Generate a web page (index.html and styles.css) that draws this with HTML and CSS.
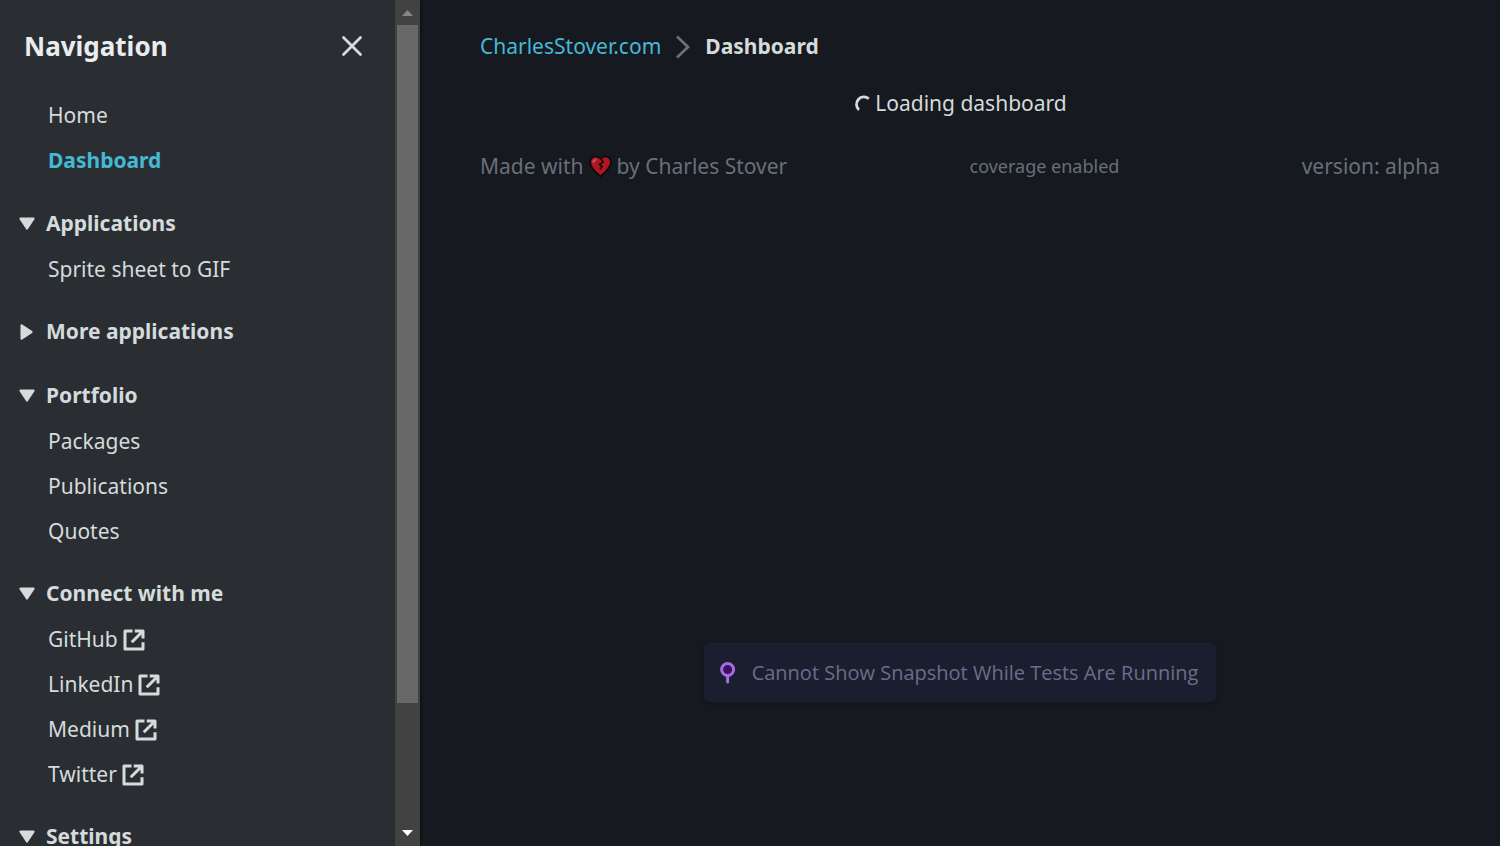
FILE: index.html
```html
<!DOCTYPE html>
<html lang="en">
<head>
<meta charset="utf-8">
<title>Dashboard</title>
<link rel="stylesheet" href="styles.css">
</head>
<body>
<svg class="sprite" aria-hidden="true">
  <symbol id="external" viewBox="0 0 16 16"><path d="M7 2H2v12h12V9.500M8.500 2H14v5M13.500 2.500L6.500 9.500" fill="none" stroke="currentColor" stroke-width="2" stroke-linejoin="round"/></symbol>
  <symbol id="caret" viewBox="0 0 16 16"><path d="M2.200 3.200h11.600L8 12z" fill="currentColor" stroke="currentColor" stroke-width="2" stroke-linejoin="round"/></symbol>
</svg>
<div class="app">
  <aside class="sidebar">
    <nav class="nav" aria-label="Navigation">
      <header class="nav-header">
        <h2 class="nav-title">Navigation</h2>
        <button class="close" type="button" aria-label="Close navigation"><svg viewBox="0 0 24 24"><path d="M3.500 2.500l17 17M20.500 2.500l-17 17" fill="none" stroke="currentColor" stroke-width="2.800" stroke-linecap="round"/></svg></button>
      </header>
      <ul class="links main-links">
        <li><a href="#">Home</a></li>
        <li><a class="active" href="#" aria-current="page">Dashboard</a></li>
      </ul>
      <section class="group">
        <button class="group-head" type="button" aria-expanded="true"><svg class="caret"><use href="#caret"/></svg>Applications</button>
        <ul class="links"><li><a href="#">Sprite sheet to GIF</a></li></ul>
      </section>
      <section class="group collapsed">
        <button class="group-head" type="button" aria-expanded="false"><svg class="caret"><use href="#caret"/></svg>More applications</button>
      </section>
      <section class="group">
        <button class="group-head" type="button" aria-expanded="true"><svg class="caret"><use href="#caret"/></svg>Portfolio</button>
        <ul class="links">
          <li><a href="#">Packages</a></li>
          <li><a href="#">Publications</a></li>
          <li><a href="#">Quotes</a></li>
        </ul>
      </section>
      <section class="group">
        <button class="group-head" type="button" aria-expanded="true"><svg class="caret"><use href="#caret"/></svg>Connect with me</button>
        <ul class="links">
          <li><a href="#">GitHub<svg class="external"><use href="#external"/></svg></a></li>
          <li><a href="#">LinkedIn<svg class="external"><use href="#external"/></svg></a></li>
          <li><a href="#">Medium<svg class="external"><use href="#external"/></svg></a></li>
          <li><a href="#">Twitter<svg class="external"><use href="#external"/></svg></a></li>
        </ul>
      </section>
      <section class="group">
        <button class="group-head" type="button" aria-expanded="true"><svg class="caret"><use href="#caret"/></svg>Settings</button>
      </section>
    </nav>
    <div class="scrollbar" aria-hidden="true">
      <svg class="arrow arrow-up" viewBox="0 0 25 25"><path d="M7 16L12.500 10L18 16z" fill="currentColor"/></svg>
      <div class="track"><div class="thumb"></div></div>
      <svg class="arrow" viewBox="0 0 25 25"><path d="M7 9L12.500 15L18 9z" fill="currentColor"/></svg>
    </div>
  </aside>
  <main class="content">
    <nav class="breadcrumbs" aria-label="Breadcrumbs">
      <a href="#">CharlesStover.com</a>
      <svg viewBox="0 0 24 24"><path d="M6 1.500L17 12L6 22.500" fill="none" stroke="currentColor" stroke-width="2.800"/></svg>
      <strong>Dashboard</strong>
    </nav>
    <p class="loading" role="status"><svg viewBox="0 0 18 18"><path d="M15.800 3.800A7 7 0 1 0 6 14.900" fill="none" stroke="currentColor" stroke-width="2.800"/></svg>Loading dashboard</p>
    <footer class="footer">
      <span class="made">Made with
        <svg viewBox="0 0 24 24" role="img" aria-label="love"><path d="M12 21.500C8 18 2 13.500 2 8C2 1.800 9 1 12 4.500C15 1 22 1.800 22 8C22 13.500 16 18 12 21.500z" fill="#b01522" stroke="#08090b" stroke-width="1.600"/><path d="M12.500 4.500L14.500 8L11 10L13.500 12L11.500 15" fill="none" stroke="#08090b" stroke-width="1.400"/><path d="M5 8.500C5 6.500 6.500 5.500 8 5.800" fill="none" stroke="#c9564d" stroke-width="2"/></svg>
        by Charles Stover</span>
      <small>coverage enabled</small>
      <span>version: alpha</span>
    </footer>
  </main>
  <div class="toast" role="status">
    <svg viewBox="0 0 24 24"><circle cx="12" cy="8.500" r="6" fill="#3b0f5c" stroke="#a56de2" stroke-width="3"/><path d="M12 15v6" stroke="#a56de2" stroke-width="3" stroke-linecap="round"/></svg>
    Cannot Show Snapshot While Tests Are Running
  </div>
</div>
</body>
</html>
```
FILE: styles.css
```css
* { box-sizing: border-box; }
body {
  margin: 0;
  background: #16191f;
  color: #d5dbdb;
  font: 21px/33px "Noto Sans", sans-serif;
}
a { color: inherit; text-decoration: none; }
button { padding: 0; border: 0; background: none; color: inherit; font: inherit; cursor: pointer; }
.sprite { position: absolute; width: 0; height: 0; }
.app { display: flex; height: 100vh; overflow: hidden; }

.sidebar {
  display: flex;
  flex: 0 0 420px;
  background: #2a2e33;
  box-shadow: 1px 0 2px rgba(0, 0, 0, 0.5);
}
.nav { flex: 1; overflow: hidden; }
.nav-header {
  display: flex;
  align-items: center;
  justify-content: space-between;
  padding: 30px 31px 30px 24px;
}
.nav-title { margin: 0; color: #eaeded; font-size: 26px; line-height: 33px; }
.close { display: flex; }
.close svg { width: 24px; height: 24px; }
.links { margin: 0; padding: 0 24px 0 48px; list-style: none; }
.links a { display: flex; align-items: center; gap: 4px; padding: 6px 0; }
.links .active { color: #44b9d6; font-weight: 700; }
.main-links { padding-bottom: 1px; }
.external { width: 24px; height: 24px; }
.group { padding-top: 23px; }
.group-head { display: flex; align-items: center; gap: 10px; margin: 0 0 7px 18px; font-weight: 700; }
.collapsed { padding-bottom: 1px; }
.caret { width: 18px; height: 18px; }
.collapsed .caret { transform: rotate(-90deg); }

.scrollbar { display: flex; flex: 0 0 25px; flex-direction: column; background: #424242; }
.arrow { width: 25px; height: 25px; color: #fff; }
.arrow-up { color: #868686; }
.track { flex: 1; padding: 0 2px; }
.thumb { height: 85.2%; background: #686868; }

.content { flex: 1; padding: 30px 60px; }
.breadcrumbs { display: flex; align-items: center; gap: 10px; color: #687078; }
.breadcrumbs a { color: #44b9d6; }
.breadcrumbs svg { width: 24px; height: 24px; }
.breadcrumbs strong { color: #d5dbdb; }
.loading { display: flex; align-items: center; justify-content: center; gap: 4px; margin: 24px 0 30px; }
.loading svg { width: 18px; height: 18px; }
.footer { display: flex; align-items: center; justify-content: space-between; color: #687078; }
.made { display: flex; align-items: center; gap: 4px; }
.made svg { width: 25px; height: 25px; }
.footer small { font-size: 18px; }

.toast {
  position: absolute;
  bottom: 144px;
  left: calc(50% + 210px);
  display: flex;
  align-items: center;
  gap: 12px;
  padding: 13px 18px 13px 12px;
  border-radius: 6px;
  background: #1b1e2e;
  box-shadow: 0 1px 4px rgba(0, 0, 0, 0.25);
  color: #6a6e8c;
  font-family: "Open Sans", "Noto Sans", sans-serif;
  font-size: 20px;
  transform: translateX(-50%);
  white-space: nowrap;
}
.toast svg { width: 24px; height: 24px; }
```
